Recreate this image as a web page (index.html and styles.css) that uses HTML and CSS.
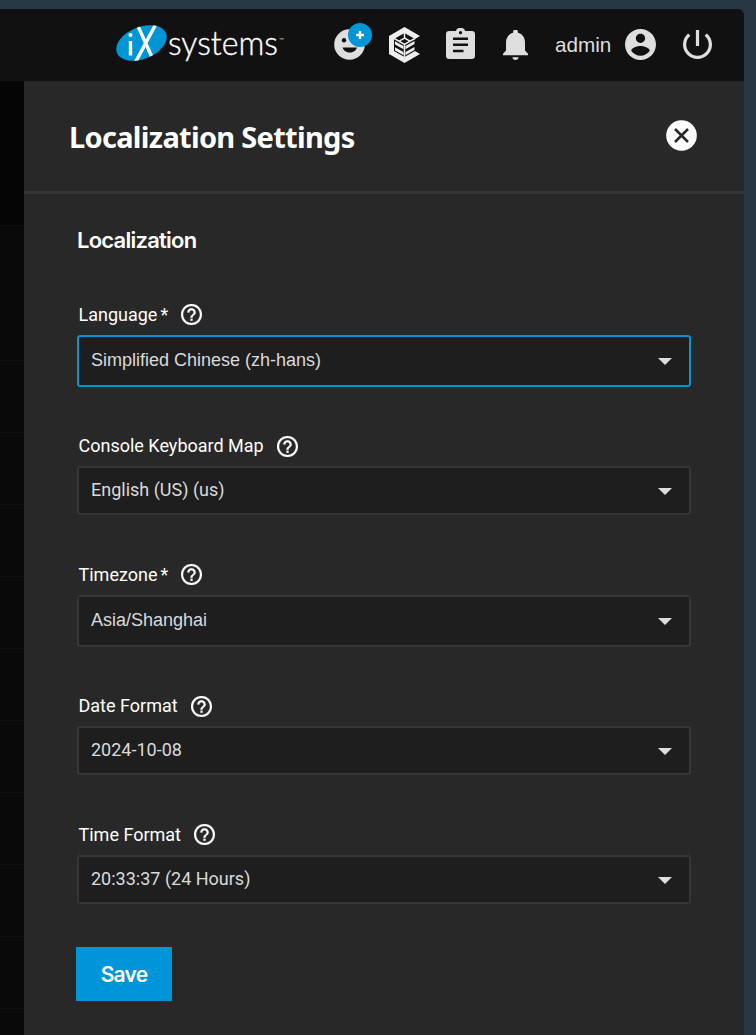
FILE: index.html
```
<!DOCTYPE html>
<html lang="en">
<head>
<meta charset="utf-8">
<title>Localization Settings</title>
<link rel="stylesheet" href="styles.css">
</head>
<body>
<svg class="defs" width="0" height="0">
  <symbol id="help" viewBox="2 2 20 20"><path d="M11 18h2v-2h-2v2zm1-16C6.480 2 2 6.480 2 12s4.480 10 10 10 10-4.480 10-10S17.520 2 12 2zm0 18c-4.410 0-8-3.590-8-8s3.590-8 8-8 8 3.590 8 8-3.590 8-8 8zm0-14c-2.210 0-4 1.790-4 4h2c0-1.100.9-2 2-2s2 .9 2 2c0 2-3 1.750-3 5h2c0-2.250 3-2.500 3-5 0-2.210-1.790-4-4-4z"/></symbol>
</svg>
<div class="window">
  <header class="topbar">
    <svg class="logo" viewBox="0 0 170 44">
      <defs><clipPath id="oval"><ellipse cx="25.500" cy="19" rx="26.500" ry="16" transform="rotate(-22 25.500 19)"/></clipPath></defs>
      <g clip-path="url(#oval)">
        <rect width="52" height="40" fill="#0095d5"/>
        <path d="M14.500 17v14.500M21 0L35.500 32M41-2L18 41" stroke="#fff" stroke-width="3.400" fill="none"/>
        <circle cx="14.500" cy="11" r="2" fill="#fff"/>
      </g>
      <text class="logo-name" x="52" y="31" textLength="110" lengthAdjust="spacingAndGlyphs">systems</text>
      <text class="logo-mark" x="163" y="18">™</text>
    </svg>
    <div class="status">
      <svg class="smile" viewBox="0 0 31 31"><circle cx="15.500" cy="15.500" r="15.300"/><path class="cut" d="M8.500 18.500h14.500c-1.200 3.600-4 5-7.300 5S9.700 22 8.500 18.500z"/><circle class="cut" cx="10" cy="11.200" r="2.200"/></svg>
      <span class="badge"><svg viewBox="0 0 24 24"><path d="M12 8v8M8 12h8" stroke="#fff" stroke-width="2.400"/></svg></span>
    </div>
    <svg class="cube" viewBox="0 0 31 36">
      <path d="M15.500 0L31 9l-5 3-10.500-6L5 12v12l10.500 6L26 24l5 3-15.500 9L0 27V9z"/>
      <path d="M15.500 6v6M15.500 11l5.500 3.200-5.500 3.200-5.500-3.200zM5 11.500l5 2.700M26 11.500l-5 2.700M15.500 17v14" fill="none" stroke="#eee" stroke-width="1.500"/>
      <path d="M6 14.200l8.500 4.900v3.200L6 17.400zM6 20.200l8.500 4.900v3.200L6 23.400zM16.500 19.100l9-5.200v3.200l-9 5.200zM16.500 25.100l9-5.200v3.200l-9 5.200z"/>
    </svg>
    <svg class="clip" viewBox="0 0 29 31">
      <path d="M3.200 3H9.800a5 5 0 0 1 9.400 0h6.600A3.200 3.200 0 0 1 29 6.200v21.600a3.200 3.200 0 0 1-3.200 3.200H3.200A3.200 3.200 0 0 1 0 27.800V6.200A3.200 3.200 0 0 1 3.200 3z"/>
      <path class="cut" d="M7 9.500h15v2.600H7zM7 15.500h15v2.600H7zM7 21.700h10.500v2.600H7z"/><circle class="cut" cx="14.500" cy="4.700" r="1.600"/>
    </svg>
    <svg class="bell" viewBox="0 0 25 30"><path d="M12.500 30c1.700 0 3.100-1.200 3.100-2.700H9.400c0 1.500 1.400 2.700 3.100 2.700zM22 20.500v-8c0-4.900-2.600-8.600-7.100-9.700V2a2.400 2.400 0 0 0-4.800 0v.8C5.600 3.900 3 7.600 3 12.500v8L0 23.800v1.500h25v-1.500z"/></svg>
    <span class="user">admin</span>
    <svg class="account" viewBox="2 2 20 20"><path d="M12 2C6.480 2 2 6.480 2 12s4.480 10 10 10 10-4.480 10-10S17.520 2 12 2zm0 3c1.660 0 3 1.340 3 3s-1.340 3-3 3-3-1.340-3-3 1.340-3 3-3zm0 14.200c-2.500 0-4.710-1.280-6-3.220.03-1.990 4-3.080 6-3.080 1.990 0 5.970 1.090 6 3.080-1.290 1.940-3.500 3.220-6 3.220z"/></svg>
    <svg class="power" viewBox="3 3 18 18"><path d="M13 3h-2v10h2V3zm4.830 2.170l-1.420 1.420C17.990 7.860 19 9.810 19 12c0 3.870-3.130 7-7 7s-7-3.130-7-7c0-2.190 1.010-4.140 2.580-5.420L6.170 5.170C4.230 6.820 3 9.260 3 12c0 4.970 4.030 9 9 9s9-4.030 9-9c0-2.740-1.230-5.180-3.170-6.830z"/></svg>
  </header>
  <div class="main">
    <div class="backdrop"><i class="first"></i><i class="second"></i><i></i><i></i><i></i><i></i><i></i><i></i><i></i><i></i><i></i></div>
    <section class="panel">
      <div class="panel-head">
        <h1>Localization Settings</h1>
        <svg class="close" viewBox="0 0 31 31"><circle cx="15.500" cy="15.500" r="15.300" fill="#fff"/><path d="M9 9l13 13M22 9L9 22" stroke="#282828" stroke-width="2.600"/></svg>
      </div>
      <form class="form">
        <h2>Localization</h2>
        <div class="field tall">
          <div class="label"><span>Language<b>*</b></span><svg><use href="#help"/></svg></div>
          <div class="select focused"><span>Simplified Chinese (zh-hans)</span><i></i></div>
        </div>
        <div class="field low">
          <div class="label"><span>Console Keyboard Map</span><svg><use href="#help"/></svg></div>
          <div class="select"><span>English (US) (us)</span><i></i></div>
        </div>
        <div class="field tall">
          <div class="label"><span>Timezone<b>*</b></span><svg><use href="#help"/></svg></div>
          <div class="select"><span>Asia/Shanghai</span><i></i></div>
        </div>
        <div class="field low">
          <div class="label"><span>Date Format</span><svg><use href="#help"/></svg></div>
          <div class="select"><span>2024-10-08</span><i></i></div>
        </div>
        <div class="field">
          <div class="label"><span>Time Format</span><svg><use href="#help"/></svg></div>
          <div class="select"><span>20:33:37 (24 Hours)</span><i></i></div>
        </div>
        <button class="save" type="button">Save</button>
      </form>
    </section>
  </div>
</div>
</body>
</html>
```
FILE: styles.css
```
* { box-sizing: border-box; }
body { margin: 0; height: 1035px; overflow: hidden; background: linear-gradient(90deg, #283946, #263642); padding: 9px 12px 0 0; font-family: Roboto, sans-serif; }
.defs { position: absolute; }
svg { display: block; flex: none; }
.window { height: 1026px; overflow: hidden; border-top-right-radius: 6px; background: #282828; }
.topbar { display: flex; align-items: flex-start; height: 72px; background: #111; padding-left: 116px; fill: #dedede; }
.cut { fill: #111; }
.logo { width: 170px; height: 44px; margin-top: 15px; overflow: visible; }
.logo-name { font: 300 33px Lato, sans-serif; fill: #fff; stroke: #fff; stroke-width: .35px; }
.logo-mark { font: 6px Lato, sans-serif; fill: #ccc; }
.status { position: relative; width: 31px; height: 31px; margin: 20px 0 0 48px; }
.badge { position: absolute; left: 14px; top: -6px; width: 24px; height: 24px; border-radius: 50%; background: #0095d5; }
.cube { width: 31px; height: 36px; margin: 18px 0 0 24px; fill: #eee; }
.clip { width: 29px; height: 31px; margin: 19px 0 0 26px; }
.bell { width: 25px; height: 30px; margin: 21px 0 0 28px; }
.user { width: 70px; margin: 22px 0 0 27px; font: 20.700px/28px "Liberation Sans", Arial, sans-serif; color: #dedede; }
.account { width: 31px; height: 31px; margin-top: 20px; }
.power { width: 29px; height: 29px; margin: 21px 0 0 27px; }
.main { display: flex; height: 954px; }
.backdrop { width: 24px; flex: none; background: #090909; }
.backdrop i { display: block; height: 72px; border-bottom: 1px solid #0e0e0e; }
.backdrop .first { height: 145px; background: #050505; }
.backdrop .second { height: 135px; }
.panel { flex: 1; background: #282828; }
.panel-head { display: flex; justify-content: space-between; height: 113px; padding: 39px 47.500px 0 45px; border-bottom: 3px solid #343434; }
h1 { margin: 0; color: #fff; font: 700 29px/34px "Noto Sans", sans-serif; letter-spacing: -.7px; white-space: nowrap; }
.close { width: 31px; height: 31px; }
.form { padding: 31px 53px 0; }
h2 { margin: 0 0 46px; height: 30px; color: #fff; font: 600 22px/30px Inter, sans-serif; letter-spacing: -.75px; }
.label { display: flex; align-items: center; gap: 13px; height: 28px; margin-bottom: 6px; padding-left: 1.500px; color: #fff; font-size: 18px; line-height: 28px; }
.label b { font-weight: 400; margin-left: 3px; }
.label svg { width: 21px; height: 21px; fill: #fff; stroke: #fff; stroke-width: .2px; margin-top: -1px; overflow: visible; }
.low .label svg { margin-top: 1px; }
.field { margin-bottom: 43px; }
.select { display: flex; justify-content: space-between; align-items: center; height: 49px; padding: 0 17px 0 12px; border: 2px solid #363636; border-radius: 3px; background: #1e1e1e; color: #dadada; font-size: 18px; }
.select span { margin-top: -2px; }
.select i { border: 7.500px solid transparent; border-top-color: #dedede; border-bottom: 0; margin-top: 1px; }
.tall { margin-bottom: 45px; }
.low { margin-bottom: 46px; }
.tall .select { height: 52px; font-family: "Liberation Sans", Arial, sans-serif; }
.select.focused { border-color: #0095d5; }
.save { display: block; width: 96px; height: 54px; margin-left: -1px; padding: 1px 0 0; border: 0; background: #0095d8; color: #fff; font: 600 21px Inter, sans-serif; letter-spacing: -.8px; }
```
